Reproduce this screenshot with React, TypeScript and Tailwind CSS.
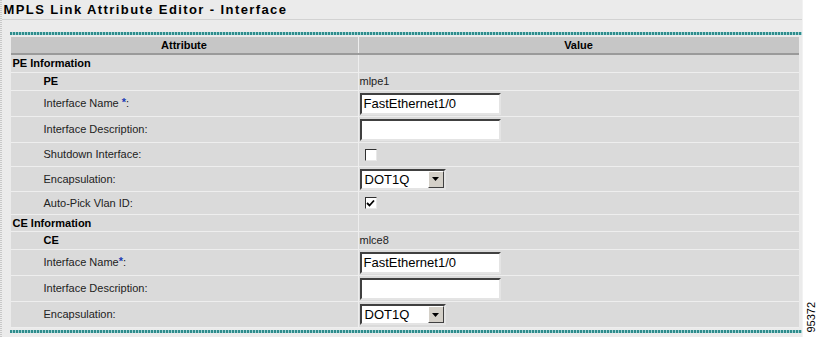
import React from "react";

type Row =
    | { kind: "section"; label: string; h: string }
    | { kind: "key"; label: string; value: string; h: string }
    | { kind: "text"; label: string; value: string; h: string; star?: "space" | "tight" }
    | { kind: "check"; label: string; checked: boolean; h: string }
    | { kind: "select"; label: string; value: string; h: string };

const rows: Row[] = [
    { kind: "section", label: "PE Information", h: "h-[18px]" },
    { kind: "key", label: "PE", value: "mlpe1", h: "h-[18px]" },
    { kind: "text", label: "Interface Name", value: "FastEthernet1/0", h: "h-[26px]", star: "space" },
    { kind: "text", label: "Interface Description:", value: "", h: "h-[26px]" },
    { kind: "check", label: "Shutdown Interface:", checked: false, h: "h-[24px]" },
    { kind: "select", label: "Encapsulation:", value: "DOT1Q", h: "h-[25px]" },
    { kind: "check", label: "Auto-Pick Vlan ID:", checked: true, h: "h-[23px]" },
    { kind: "section", label: "CE Information", h: "h-[17px]" },
    { kind: "key", label: "CE", value: "mlce8", h: "h-[18px]" },
    { kind: "text", label: "Interface Name", value: "FastEthernet1/0", h: "h-[26px]", star: "tight" },
    { kind: "text", label: "Interface Description:", value: "", h: "h-[26px]" },
    { kind: "select", label: "Encapsulation:", value: "DOT1Q", h: "h-[26px]" },
];

function TextBox({ value }: { value: string }) {
    return (
        <div className="w-[141px] h-[22px] bg-white border-2 border-t-[#404040] border-l-[#404040] border-b-[#e4e4e4] border-r-[#e4e4e4] flex items-center px-[2px] text-[13px] leading-none text-black">
            {value}
        </div>
    );
}

function CheckBox({ checked }: { checked: boolean }) {
    return (
        <div className="ml-[5px] w-[12px] h-[12px] bg-white border border-t-[#303030] border-l-[#303030] border-b-[#e8e8e8] border-r-[#e8e8e8] flex items-center justify-center">
            {checked && (
                <svg width="9" height="9" viewBox="0 0 9 9">
                    <path d="M1 4 L3.5 6.5 L8 1.5" stroke="#000" strokeWidth="1.8" fill="none" />
                </svg>
            )}
        </div>
    );
}

function SelectBox({ value }: { value: string }) {
    return (
        <div className="w-[86px] h-[21px] bg-white border-2 border-t-[#404040] border-l-[#404040] border-b-[#e4e4e4] border-r-[#e4e4e4] flex items-stretch">
            <div className="flex-1 flex items-center pl-[3px] text-[13px] leading-none text-black">{value}</div>
            <div className="w-[16px] bg-[#d4d0c8] border border-t-white border-l-white border-b-[#404040] border-r-[#404040] flex items-center justify-center">
                <svg width="7" height="4" viewBox="0 0 7 4">
                    <path d="M0 0 H7 L3.5 4 Z" fill="#000" />
                </svg>
            </div>
        </div>
    );
}

function TableRow({ row }: { row: Row }) {
    if (row.kind === "section") {
        return (
            <div className={`flex ${row.h} border-b border-[#eeeeee] bg-[#dadada]`}>
                <div className="w-[347px] pl-[2px] flex items-center font-bold text-[11px] text-black">{row.label}</div>
                <div className="flex-1 border-l border-[#eeeeee]" />
            </div>
        );
    }
    return (
        <div className={`flex ${row.h} border-b border-[#eeeeee] bg-[#dadada]`}>
            <div className={`w-[347px] pl-[33px] flex items-center text-[11px] text-[#222] ${row.kind === "key" ? "font-bold text-black" : ""}`}>
                {row.label}
                {row.kind === "text" && row.star && (
                    <>
                        {row.star === "space" && <span>&nbsp;</span>}
                        <span className="text-[#1a3cb4] font-bold self-start mt-[3px] text-[11px]">*</span>
                        <span>:</span>
                    </>
                )}
            </div>
            <div className="flex-1 border-l border-[#eeeeee] flex items-center pl-[1px] text-[11px] text-[#222]">
                {row.kind === "key" && <span>{row.value}</span>}
                {row.kind === "text" && <TextBox value={row.value} />}
                {row.kind === "check" && <CheckBox checked={row.checked} />}
                {row.kind === "select" && <SelectBox value={row.value} />}
            </div>
        </div>
    );
}

const teal = "h-[3px] bg-[repeating-linear-gradient(90deg,#2e8c8c_0_2px,#9fd2d2_2px_3px)]";

export default function App() {
    return (
        <div className="flex w-[819px] h-[337px] bg-white font-['Liberation_Sans',Arial,sans-serif] overflow-hidden">
            <div className="w-[3px] bg-[repeating-linear-gradient(0deg,#c8c8c8_0_1px,#ececec_1px_2px)]" />
            <div className="w-[800px] bg-[#ebebeb] flex flex-col">
                <div className="h-[20px] border-b border-[#d2d2d2] pl-[2px] flex items-center">
                    <span className="font-bold text-[13px] tracking-[1.4px] text-black">MPLS Link Attribute Editor - Interface</span>
                </div>
                <div className="pl-[8px] pt-[12px] flex flex-col">
                    <div className={`${teal} w-[792px]`} />
                    <div className="ml-[1px] w-[788px] mt-[2px] flex flex-col">
                        <div className="flex h-[18px] bg-[#c6c6c6] border-b-2 border-[#9a9a9a] font-bold text-[11px] text-black">
                            <div className="w-[347px] flex items-center justify-center">Attribute</div>
                            <div className="flex-1 border-l border-[#eeeeee] flex items-center justify-center">Value</div>
                        </div>
                        {rows.map((r, i) => (
                            <TableRow key={i} row={r} />
                        ))}
                    </div>
                    <div className={`${teal} w-[792px] mt-[2px]`} />
                </div>
            </div>
            <div className="w-[2px] bg-[#f2f2f2]" />
            <div className="flex-1 flex items-end justify-center pb-[4px]">
                <span className="[writing-mode:vertical-rl] rotate-180 text-[11px] text-black">95372</span>
            </div>
        </div>
    );
}
